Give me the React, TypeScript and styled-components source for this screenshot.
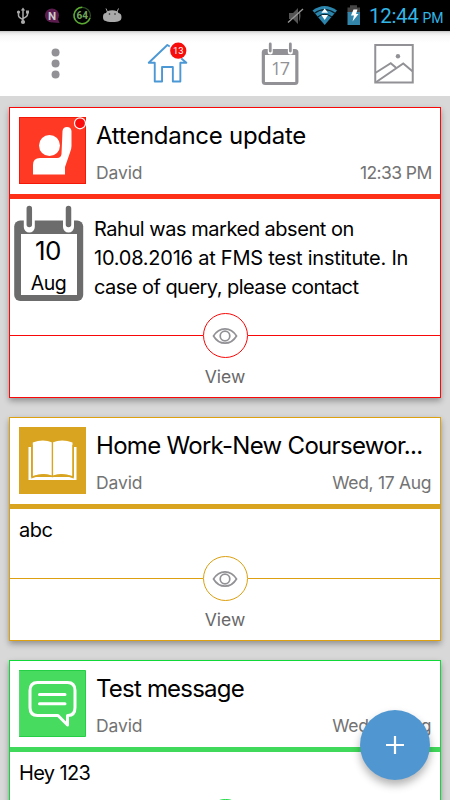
import React from "react";
import styled, { createGlobalStyle } from "styled-components";

const Global = createGlobalStyle`
  * { box-sizing: border-box; }
  body { margin: 0; background: #d8d8d8; font-family: Inter, Roboto, sans-serif; overflow: hidden; }
  svg { display: block; flex-shrink: 0; }
`;

const Screen = styled.div`
  position: relative;
  width: 450px;
  height: 800px;
  overflow: hidden;
  background: #d8d8d8;
`;

const StatusBar = styled.header`
  height: 31px;
  background: #000;
  display: flex;
  justify-content: space-between;
`;

const Clock = styled.span<{ $small?: boolean }>`
  color: #33b5e5;
  font-family: Roboto, sans-serif;
  font-size: ${(p) => (p.$small ? 14 : 20.5)}px;
  letter-spacing: ${(p) => (p.$small ? -0.2 : -0.3)}px;
  line-height: 33px;
`;

const ClockGroup = styled.div`
  display: flex;
  align-items: baseline;
  gap: 4px;
  width: 81px;
`;

const StatusGroup = styled.div`
  display: flex;
`;

const Toolbar = styled.nav`
  height: 65px;
  background: linear-gradient(#c4c4c4 0, #e9e9e9 2px, #f8f8f8 5px, #fff 12px);
  display: grid;
  grid-template-columns: repeat(4, 112.5px);
`;

const Tab = styled.button`
  border: 0;
  padding: 0;
  background: none;
  display: flex;
  justify-content: center;
`;

const Feed = styled.main`
  padding: 11px 9px 0;
  display: flex;
  flex-direction: column;
  gap: 19px;
`;

const Card = styled.article<{ $c: string }>`
  border: 1px solid ${(p) => p.$c};
  background: #fff;
  box-shadow: 0 3px 6px rgba(0, 0, 0, 0.33);
`;

const CardHeader = styled.div<{ $line: string }>`
  height: 91px;
  border-bottom: 5px solid ${(p) => p.$line};
  display: flex;
  padding: 9px 9px 0;
  gap: 10px;
`;

const Headings = styled.div`
  flex: 1;
  min-width: 0;
`;

const Title = styled.h2<{ $ls: number }>`
  margin: 3px 0 0 0;
  font-size: 24px;
  line-height: 32px;
  font-weight: 400;
  letter-spacing: ${(p) => p.$ls}px;
  color: #000;
  white-space: nowrap;
`;

const Meta = styled.div`
  margin-top: 10px;
  display: flex;
  justify-content: space-between;
  font-size: 17.5px;
  line-height: 22px;
  color: #737373;
`;

const Sized = styled.span<{ $ls: number }>`
  letter-spacing: ${(p) => p.$ls}px;
  margin-right: ${(p) => p.$ls}px;
  white-space: nowrap;
`;

const Body = styled.div<{ $h: number }>`
  height: ${(p) => p.$h}px;
  display: flex;
  padding: 6px 0 0 4px;
  gap: 10px;
`;

const Message = styled.p<{ $inset?: boolean }>`
  margin: ${(p) => (p.$inset ? "1px 0 0 5px" : "10px 0 0")};
  font-size: 20px;
  line-height: 28.8px;
  color: #000;
  display: flex;
  flex-direction: column;
`;

const Footer = styled.div`
  height: 84px;
  display: flex;
  flex-direction: column;
`;

const Divider = styled.div<{ $c: string }>`
  display: flex;
  align-items: center;
  &::before,
  &::after {
    content: "";
    flex: 1;
    height: 1px;
    background: ${(p) => p.$c};
  }
`;

const EyeButton = styled.button<{ $c: string }>`
  width: 45px;
  height: 45px;
  padding: 0;
  border-radius: 50%;
  border: 1px solid ${(p) => p.$c};
  background: #fff;
  display: flex;
  align-items: center;
  justify-content: center;
`;

const ViewLabel = styled.div`
  margin-top: 8px;
  text-align: center;
  font-size: 17.5px;
  line-height: 22px;
  color: #686868;
`;

const Fab = styled.button`
  position: absolute;
  left: 360px;
  top: 710px;
  width: 70px;
  height: 70px;
  border: 0;
  padding: 0;
  border-radius: 50%;
  background: #5097d2;
  box-shadow: 0 5px 9px rgba(0, 0, 0, 0.3);
  display: flex;
  align-items: center;
  justify-content: center;
`;

const StatusLeft = () => (
  <svg width="130" height="31" viewBox="0 0 130 31">
    <g stroke="#aaa" strokeWidth="1.5" fill="none">
      <path d="M23 9v14M18.500 12v3.500q0 2 4.500 4M27.500 12v2.500q0 2-4.500 4" />
    </g>
    <g fill="#aaa">
      <path d="M20.800 10.500 23 7.500l2.200 3z" />
      <circle cx="23" cy="22" r="2.100" />
      <circle cx="18.500" cy="12" r="1.600" />
      <path d="M26 10.500h3v3h-3z" />
    </g>
    <circle cx="52" cy="15.500" r="7" fill="#5c1d4e" />
    <path d="M53 22.500l6.500.5-2-5z" fill="#5c1d4e" />
    <text x="52" y="19.500" textAnchor="middle" fontFamily="Roboto, sans-serif" fontWeight="700" fontSize="11.500" fill="#ccc">N</text>
    <circle cx="82.200" cy="15.500" r="8.200" fill="none" stroke="#2c5021" strokeWidth="1.200" />
    <path d="M82.200 7.300A8.200 8.200 0 1 0 90 18" fill="none" stroke="#5ba832" strokeWidth="1.500" />
    <text x="82.300" y="19.300" textAnchor="middle" fontFamily="Roboto, sans-serif" fontWeight="700" fontSize="10" fill="#73a95c">64</text>
    <path d="M107.500 12 106 8.500M117 12l1.500-3.500" stroke="#aaa" strokeWidth="1" />
    <path d="M106 13q1-2.800 6.200-2.800T118.500 13q3 .5 3 4t-2.500 4q-1.500 1-6.700 1t-6.300-1q-3 0-3-4t3-4z" fill="#aaa" />
    <circle cx="109.500" cy="14" r=".8" fill="#222" />
    <circle cx="115" cy="14" r=".8" fill="#222" />
  </svg>
);

const StatusRight = () => (
  <svg width="82" height="31" viewBox="287 0 82 31">
    <path d="M289 13h4l5-5v16l-5-5h-4zM299 10q3 5 0 12" fill="#555" />
    <path d="M288 22.500 303 9" stroke="#999" strokeWidth="1.300" />
    <path d="M312.500 10.500Q324.500 1.500 337 10.500L324.700 25z" fill="#2b85ac" />
    <path d="M314.500 13.200Q324.500 6 335 13.200M317.500 17Q324.700 11.500 332 17" fill="none" stroke="#081d27" strokeWidth="1.100" />
    <path d="m324.700 8.500 3.300 4.300h-6.600zM321.400 15h6.600l-3.300 5z" fill="#fff" />
    <path d="M347.500 7.500h2.500V5.300h7v2.200h3V13h-12.500z" fill="#444" />
    <path d="M347.500 12H360v13h-12.500z" fill="#3385aa" />
    <path d="M353.500 9.500h4l-1.500 4.500h2.500l-6 7.500 1.500-6h-3z" fill="#fff" />
  </svg>
);

const Dots = () => (
  <svg width="112" height="65" viewBox="0.250 31 112 65" fill="#929296">
    <circle cx="55.800" cy="52.500" r="4" />
    <circle cx="55.800" cy="63.500" r="4" />
    <circle cx="55.800" cy="74.600" r="4" />
  </svg>
);

const Home = () => (
  <svg width="112" height="65" viewBox="113.250 31 112 65">
    <path
      d="M170 46.500 167.600 45 149 62.800h6V81.500h7.300V67h10.800v14.500h7.500V62.800h6l-5-4.300"
      fill="none"
      stroke="#4b98d5"
      strokeWidth="1.900"
      strokeLinejoin="round"
    />
    <circle cx="178.500" cy="50.700" r="8.100" fill="#f80d0d" />
    <text x="178.500" y="54.300" textAnchor="middle" fontFamily="Roboto, sans-serif" fontSize="9.500" fill="#fff">13</text>
  </svg>
);

const Calendar = () => (
  <svg width="112" height="65" viewBox="225.250 31 112 65">
    <rect x="262" y="49" width="36.700" height="36" rx="3.500" fill="#929296" />
    <path d="M265.200 55h30.300v27h-30.300z" fill="#fff" />
    <g strokeLinecap="round">
      <path d="M270.500 44v8M290.600 44v8" stroke="#fff" strokeWidth="5" />
      <path d="M270.500 44v7M290.600 44v7" stroke="#929296" strokeWidth="2.800" />
    </g>
    <text x="280" y="74.500" textAnchor="middle" fontFamily="Open Sans, sans-serif" fontSize="18" letterSpacing="-1.500" fill="#929296">17</text>
  </svg>
);

const Gallery = () => (
  <svg width="112" height="65" viewBox="337.750 31 112 65" fill="none" stroke="#929296" strokeWidth="2">
    <path d="M375 45h37.500v37.500H375z" />
    <path d="m375 73 15.500-9.800 5 4.300M376 82l27-18.500 9.500 8" />
    <circle cx="397.700" cy="56.300" r="2.200" fill="#929296" stroke="none" />
  </svg>
);

const HandIcon = () => (
  <svg width="67" height="67" viewBox="0 0 67 67">
    <rect x=".5" y=".5" width="66" height="66" fill="#ff3924" stroke="#f31808" />
    <circle cx="30.500" cy="28.500" r="10.500" fill="#fff" />
    <path d="M14 57.500V48q0-7 7-7h17q4 0 4.500-4L43.500 14q.5-4 4.500-4t4.500 4V29q0 3-1.500 6.500L46 50v7.500z" fill="#fff" />
    <circle cx="61" cy="6.300" r="5.500" fill="#fb0d0d" stroke="#fff" strokeWidth="1.200" />
  </svg>
);

const BookIcon = () => (
  <svg width="67" height="67" viewBox="0 0 67 67">
    <rect width="67" height="67" fill="#d9a521" />
    <path d="M9.500 20v33h48V20h-2.500v30H12V20z" fill="#fff" />
    <path d="M13.800 15.500Q24 11.500 33.400 15.500 43 11.500 53.500 15.500V49Q43 45.500 33.400 49 24 45.500 13.800 49z" fill="#fff" />
    <path d="M12.900 18v32.500Q24 45.500 33.400 49.500 43 45.500 54.100 50.500V18M33.400 15v34" fill="none" stroke="#d9a521" strokeWidth="1.400" />
  </svg>
);

const ChatIcon = () => (
  <svg width="67" height="67" viewBox="0 0 67 67" fill="none" stroke="#fff" strokeLinecap="round" strokeLinejoin="round">
    <rect x=".5" y=".5" width="66" height="66" fill="#47dc60" stroke="#25cf45" />
    <path d="M18.500 12.500h30q7.500 0 7.500 8v17q0 8-7 8h-.5v9.500l-9.500-9.500H18.500q-7.500 0-7.500-8v-17q0-8 7.500-8z" strokeWidth="3" />
    <path d="M20.500 24.500h25.500M20.500 33.800h25.500" strokeWidth="3" />
  </svg>
);

const DateIcon = () => (
  <svg width="70" height="97" viewBox="14 205 70 97">
    <rect x="14.200" y="220.500" width="69" height="80.500" rx="6" fill="#6c6c6c" />
    <path d="M21 234h56v61H21z" fill="#fff" />
    <g strokeLinecap="round">
      <path d="M29.300 216v11M68.500 216v11" stroke="#fff" strokeWidth="11" />
      <path d="M29.300 208.500v16M68.500 208.500v16" stroke="#6c6c6c" strokeWidth="5.500" />
    </g>
    <g fill="#000" textAnchor="middle" fontFamily="Inter, sans-serif">
      <text x="48" y="260" fontSize="26" letterSpacing="-.5">10</text>
      <text x="48.500" y="290" fontSize="19.500" letterSpacing="-.4">Aug</text>
    </g>
  </svg>
);

const Eye = () => (
  <svg width="26" height="18" viewBox="0 0 26 18" fill="none" stroke="#929296" strokeWidth="1.700">
    <path d="M1.500 9C4.500 4 8.500 1.800 13 1.800S21.500 4 24.500 9C21.500 14 17.500 16.200 13 16.200S4.500 14 1.500 9z" />
    <circle cx="13" cy="9" r="4.800" />
  </svg>
);

type Notice = {
  title: string;
  titleSpacing: number;
  time: string;
  timeSpacing: number;
  edge: string;
  bar: string;
  icon: React.ReactNode;
  bodyHeight: number;
  date?: React.ReactNode;
  lines: [string, number][];
  action?: string;
};

const notices: Notice[] = [
  {
    title: "Attendance update",
    titleSpacing: -0.27,
    time: "12:33 PM",
    timeSpacing: -0.6,
    edge: "#f80808",
    bar: "#ff3018",
    icon: <HandIcon />,
    bodyHeight: 114,
    date: <DateIcon />,
    lines: [
      ["Rahul was marked absent on", -0.47],
      ["10.08.2016 at FMS test institute. In", -0.24],
      ["case of query, please contact", -0.54],
    ],
    action: "View",
  },
  {
    title: "Home Work-New Coursewor...",
    titleSpacing: -0.7,
    time: "Wed, 17 Aug",
    timeSpacing: -0.3,
    edge: "#dca010",
    bar: "#d9a521",
    icon: <BookIcon />,
    bodyHeight: 47,
    lines: [["abc", -0.5]],
    action: "View",
  },
  {
    title: "Test message",
    titleSpacing: -0.8,
    time: "Wed, 17 Aug",
    timeSpacing: -0.3,
    edge: "#10d838",
    bar: "#40d95b",
    icon: <ChatIcon />,
    bodyHeight: 47,
    lines: [["Hey 123", -0.65]],
  },
];

export default function App() {
  return (
    <Screen>
      <Global />
      <StatusBar>
        <StatusLeft />
        <StatusGroup>
          <StatusRight />
          <ClockGroup>
            <Clock>12:44</Clock>
            <Clock $small>PM</Clock>
          </ClockGroup>
        </StatusGroup>
      </StatusBar>
      <Toolbar>
        <Tab><Dots /></Tab>
        <Tab><Home /></Tab>
        <Tab><Calendar /></Tab>
        <Tab><Gallery /></Tab>
      </Toolbar>
      <Feed>
        {notices.map((n) => (
          <Card key={n.title} $c={n.edge}>
            <CardHeader $line={n.bar}>
              {n.icon}
              <Headings>
                <Title $ls={n.titleSpacing}>{n.title}</Title>
                <Meta>
                  <Sized $ls={-0.1}>David</Sized>
                  <Sized $ls={n.timeSpacing}>{n.time}</Sized>
                </Meta>
              </Headings>
            </CardHeader>
            <Body $h={n.bodyHeight}>
              {n.date}
              <Message $inset={!n.date}>
                {n.lines.map(([text, ls]) => (
                  <Sized key={text} $ls={ls}>{text}</Sized>
                ))}
              </Message>
            </Body>
            <Footer>
              <Divider $c={n.edge}>
                <EyeButton $c={n.edge}><Eye /></EyeButton>
              </Divider>
              {n.action && <ViewLabel>{n.action}</ViewLabel>}
            </Footer>
          </Card>
        ))}
      </Feed>
      <Fab>
        <svg width="18" height="18" viewBox="0 0 18 18" stroke="#fff" strokeWidth="2.200">
          <path d="M9 0v18M0 9h18" />
        </svg>
      </Fab>
    </Screen>
  );
}
